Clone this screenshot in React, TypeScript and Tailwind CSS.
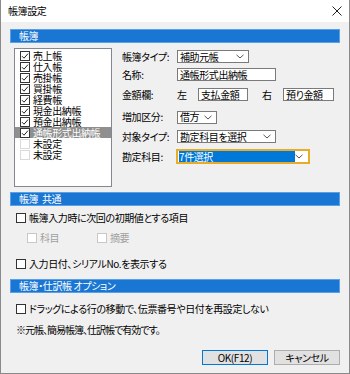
import React from 'react';

const ledgers = [
  { name: '売上帳', checked: true },
  { name: '仕入帳', checked: true },
  { name: '売掛帳', checked: true },
  { name: '買掛帳', checked: true },
  { name: '経費帳', checked: true },
  { name: '現金出納帳', checked: true },
  { name: '預金出納帳', checked: true },
  { name: '通帳形式出納帳', checked: true, selected: true },
  { name: '未設定', checked: false },
  { name: '未設定', checked: false },
];

function CheckBox({ checked = false, disabled = false, light = false }: { checked?: boolean; disabled?: boolean; light?: boolean }) {
  const border = disabled ? 'border-[#c8c8c8]' : light ? 'border-[#dadada]' : 'border-[#333333]';
  return (
    <span className={`flex h-[10px] w-[10px] shrink-0 items-center justify-center border bg-white ${border}`}>
      {checked && (
        <svg width="8" height="8" viewBox="0 0 8 8">
          <path d="M1 4.2 L3 6.2 L7 1.6" fill="none" stroke="#222" strokeWidth="1" />
        </svg>
      )}
    </span>
  );
}

function Chevron() {
  return (
    <svg width="8" height="5" viewBox="0 0 8 5" className="shrink-0">
      <path d="M0.5 0.8 L4 4 L7.5 0.8" fill="none" stroke="#444" strokeWidth="0.9" />
    </svg>
  );
}

function SectionHeader({ children }: { children: React.ReactNode }) {
  return (
    <div className="flex h-[14px] items-center border border-[#5aa0e8] bg-[#1976d2] pl-[8px] text-white">
      {children}
    </div>
  );
}

function Select({ value, width, focused = false }: { value: string; width: string; focused?: boolean }) {
  if (focused) {
    return (
      <div className={`flex h-[15px] items-center justify-between border-2 border-[#e8ab2a] bg-white pl-[1px] pr-[5px] ${width}`}>
        <span className="flex h-[11px] w-[116px] items-center bg-[#0078d7] text-white">{value}</span>
        <Chevron />
      </div>
    );
  }
  return (
    <div className={`flex h-[13px] items-center justify-between border border-[#7a7a7a] bg-white pl-[2px] pr-[4px] ${width}`}>
      <span>{value}</span>
      <Chevron />
    </div>
  );
}

function TextBox({ value, width }: { value: string; width: string }) {
  return (
    <div className={`flex h-[13px] items-center border border-[#7a7a7a] bg-white pl-[2px] ${width}`}>{value}</div>
  );
}

export default function App() {
  return (
    <div className="flex h-[374px] w-[350px] flex-col border-x border-b border-[#8a8a8a] bg-[#f0f0f0] font-['Noto_Sans_CJK_JP',sans-serif] text-[10px] leading-none tracking-[-0.4px] text-black [font-feature-settings:'palt']">
      {/* title bar */}
      <div className="flex h-[22px] shrink-0 items-center justify-between bg-white pl-[7px] pr-[7px]">
        <span>帳簿設定</span>
        <svg width="10" height="10" viewBox="0 0 10 10">
          <path d="M0.5 0.5 L9.5 9.5 M9.5 0.5 L0.5 9.5" stroke="#222" strokeWidth="1" />
        </svg>
      </div>

      <div className="flex flex-col px-[9px]">
        {/* 帳簿 */}
        <div className="mt-[7px]">
          <SectionHeader>帳簿</SectionHeader>
        </div>
        <div className="mt-[5px] flex pl-[4px]">
          <div className="flex h-[139px] w-[98px] flex-col border border-[#828790] bg-white pt-[1px]">
            {ledgers.map((l, i) => (
              <div
                key={i}
                className={`flex h-[11px] items-center gap-[3px] pl-[5px] leading-[11px] ${l.selected ? 'bg-[#8f8f8f] text-white' : ''}`}
              >
                <CheckBox checked={l.checked} light={!l.checked} />
                <span>{l.name}</span>
              </div>
            ))}
          </div>

          <div className="ml-[10px] flex flex-col">
            <div className="mt-[2px] flex h-[13px] items-center">
              <span className="w-[55px]">帳簿タイプ:</span>
              <Select value="補助元帳" width="w-[72px]" />
            </div>
            <div className="mt-[5px] flex h-[13px] items-center">
              <span className="w-[55px]">名称:</span>
              <TextBox value="通帳形式出納帳" width="w-[99px]" />
            </div>
            <div className="mt-[7px] flex h-[13px] items-center">
              <span className="w-[55px]">金額欄:</span>
              <span className="w-[21px]">左</span>
              <TextBox value="支払金額" width="w-[50px]" />
              <span className="ml-[14px] w-[21px]">右</span>
              <TextBox value="預り金額" width="w-[51px]" />
            </div>
            <div className="mt-[10px] flex h-[12px] items-center">
              <span className="w-[55px]">増加区分:</span>
              <Select value="借方" width="w-[40px]" />
            </div>
            <div className="mt-[7px] flex h-[13px] items-center">
              <span className="w-[55px]">対象タイプ:</span>
              <Select value="勘定科目を選択" width="w-[99px]" />
            </div>
            <div className="mt-[6px] flex h-[15px] items-center">
              <span className="w-[54px]">勘定科目:</span>
              <Select value="7件選択" width="w-[134px]" focused />
            </div>
          </div>
        </div>

        {/* 帳簿 共通 */}
        <div className="mt-[5px]">
          <SectionHeader>帳簿&nbsp;&nbsp;共通</SectionHeader>
        </div>
        <div className="mt-[6px] flex h-[12px] items-center gap-[3px] pl-[6px]">
          <CheckBox />
          <span>帳簿入力時に次回の初期値とする項目</span>
        </div>
        <div className="mt-[8px] flex h-[12px] items-center pl-[17px] text-[#a0a0a0]">
          <div className="flex w-[70px] items-center gap-[3px]">
            <CheckBox disabled />
            <span>科目</span>
          </div>
          <div className="flex items-center gap-[3px]">
            <CheckBox disabled />
            <span>摘要</span>
          </div>
        </div>
        <div className="mt-[14px] flex h-[12px] items-center gap-[3px] pl-[6px]">
          <CheckBox />
          <span>入力日付、シリアルNo.を表示する</span>
        </div>

        {/* 帳簿・仕訳帳 オプション */}
        <div className="mt-[9px]">
          <SectionHeader>帳簿・仕訳帳 オプション</SectionHeader>
        </div>
        <div className="mt-[10px] flex h-[12px] items-center gap-[3px] pl-[6px]">
          <CheckBox />
          <span>ドラッグによる行の移動で、伝票番号や日付を再設定しない</span>
        </div>
        <div className="mt-[9px] flex h-[12px] items-center pl-[6px]">
          <span className="tracking-[-1px]">※元帳、簡易帳簿、仕訳帳で有効です。</span>
        </div>

        {/* buttons */}
        <div className="mt-[14px] flex justify-end gap-[6px]">
          <button className="flex h-[15px] w-[66px] items-center justify-center border border-[#0078d7] bg-[#e1e1e1]">
            OK(F12)
          </button>
          <button className="flex h-[15px] w-[66px] items-center justify-center border border-[#adadad] bg-[#e1e1e1]">
            キャンセル
          </button>
        </div>
      </div>
    </div>
  );
}
